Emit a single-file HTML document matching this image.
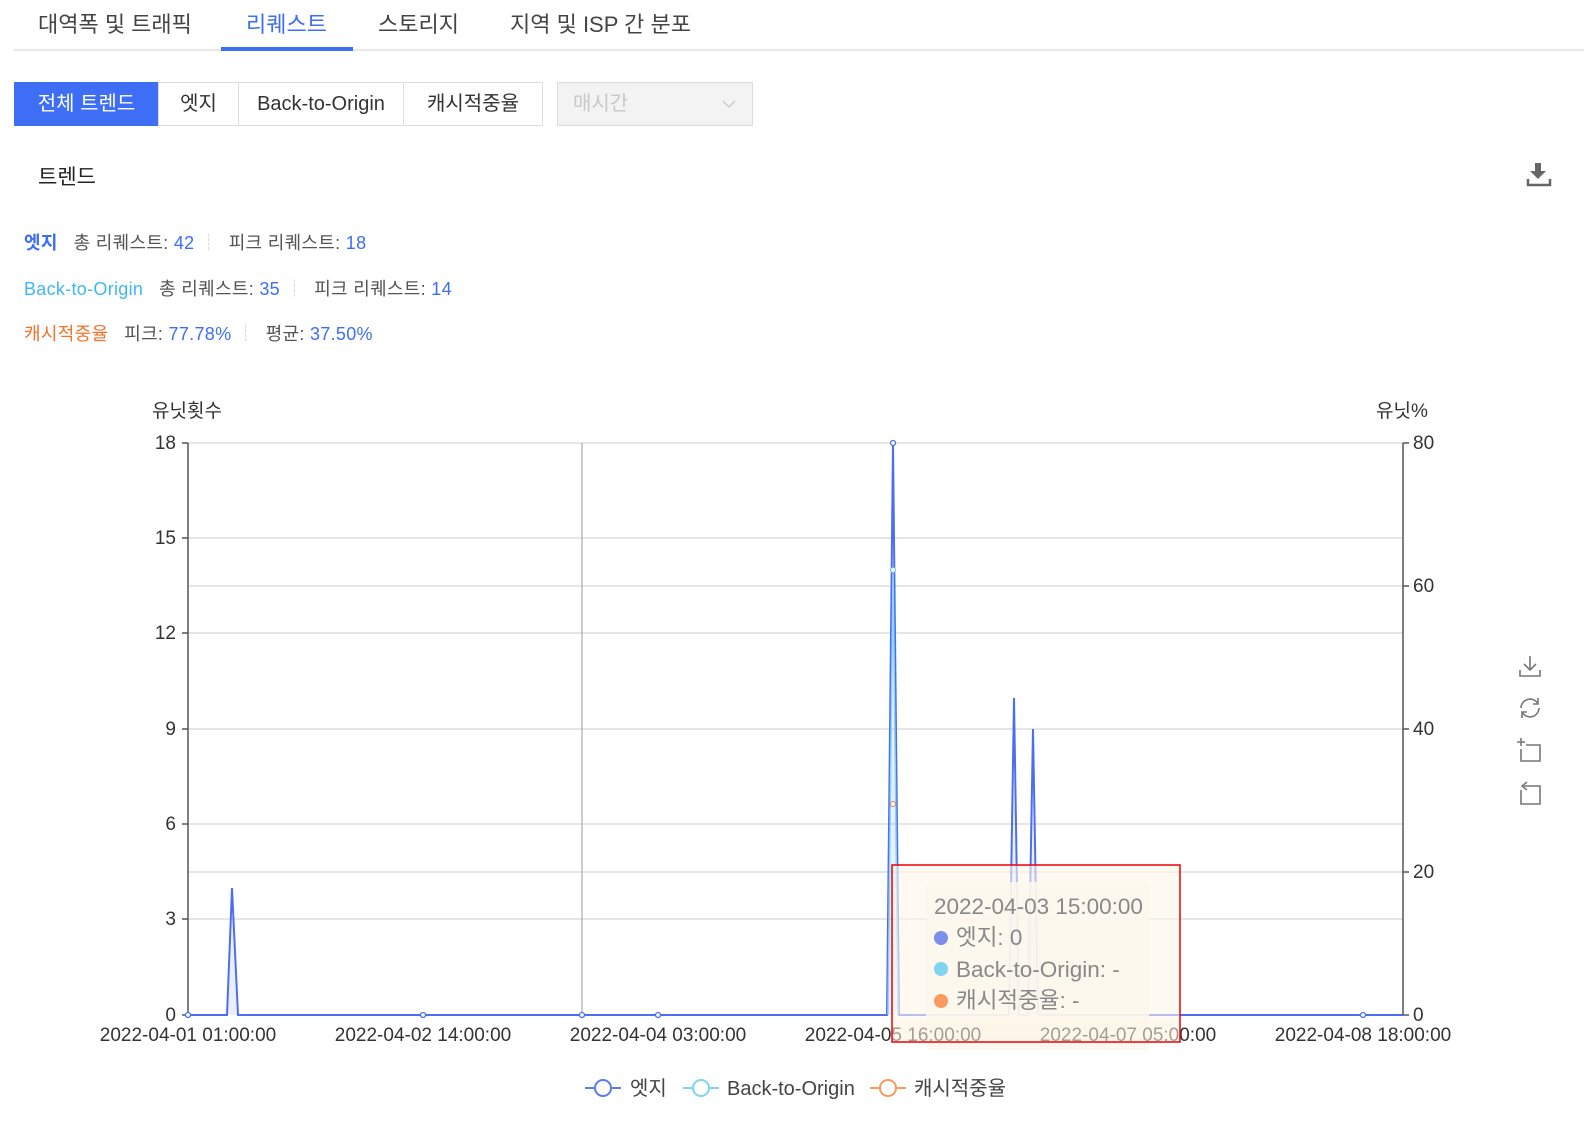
<!DOCTYPE html>
<html><head><meta charset="utf-8"><style>
*{margin:0;padding:0;box-sizing:border-box}
body{width:1584px;height:1125px;background:#fff;font-family:"Liberation Sans","Noto Sans CJK KR",sans-serif;color:#333;position:relative;overflow:hidden}
.abs{position:absolute;white-space:nowrap}
.tab{top:7px;font-size:22px;color:#444}
.btn{position:absolute;top:82px;height:44px;border:1px solid #ddd;font-size:20px;line-height:42px;text-align:center;color:#333;background:#fff}
.st{font-size:18px;color:#555;letter-spacing:0.3px}
.b{color:#3d6ef5}
</style></head><body>
<div class="abs tab" style="left:38px">대역폭 및 트래픽</div>
<div class="abs tab" style="left:246px;color:#3d6ef5">리퀘스트</div>
<div class="abs tab" style="left:378px">스토리지</div>
<div class="abs tab" style="left:510px">지역 및 ISP 간 분포</div>
<div class="abs" style="left:14px;top:49px;width:1570px;height:2px;background:#e8e8e8"></div>
<div class="abs" style="left:221px;top:47px;width:132px;height:4px;background:#3d6ef5"></div>

<div class="btn" style="left:14px;width:145px;background:#3d6ef5;border-color:#3d6ef5;color:#fff">전체 트렌드</div>
<div class="btn" style="left:158px;width:81px">엣지</div>
<div class="btn" style="left:238px;width:166px">Back-to-Origin</div>
<div class="btn" style="left:403px;width:140px">캐시적중율</div>
<div class="btn" style="left:557px;width:196px;background:#f3f3f3;color:#c8c8c8;text-align:left;padding-left:15px">매시간<svg style="position:absolute;right:16px;top:17px" width="14" height="9"><path d="M1 1l6 6 6-6" stroke="#ccc" stroke-width="1.5" fill="none"/></svg></div>

<div class="abs" style="left:38px;top:161px;font-size:21px;color:#222">트렌드</div>
<svg class="abs" style="left:1526px;top:162px" width="26" height="26" viewBox="0 0 26 26"><path d="M9 1h6v8h5l-8 8-8-8h5z" fill="#666"/><path d="M2 17v6h22v-6" stroke="#666" stroke-width="2.5" fill="none"/></svg>

<div class="abs st" style="left:24px;top:229px"><span style="color:#3d6ef5;font-weight:bold">엣지</span>&nbsp;&nbsp; 총 리퀘스트: <span class="b">42</span> <span style="color:#ccc">┊</span>&nbsp; 피크 리퀘스트: <span class="b">18</span></div>
<div class="abs st" style="left:24px;top:275px"><span style="color:#3db8f5">Back-to-Origin</span>&nbsp;&nbsp; 총 리퀘스트: <span class="b">35</span> <span style="color:#ccc">┊</span>&nbsp; 피크 리퀘스트: <span class="b">14</span></div>
<div class="abs st" style="left:24px;top:320px"><span style="color:#f5702a">캐시적중율</span>&nbsp;&nbsp; 피크: <span class="b">77.78%</span> <span style="color:#ccc">┊</span>&nbsp; 평균: <span class="b">37.50%</span></div>

<svg class="abs" style="left:0;top:0" width="1584" height="1125" font-family="Liberation Sans,Noto Sans CJK KR,sans-serif">
<g stroke="#ddd" stroke-width="1.5">
<line x1="188" x2="1403" y1="443" y2="443"/><line x1="188" x2="1403" y1="538" y2="538"/><line x1="188" x2="1403" y1="586" y2="586"/><line x1="188" x2="1403" y1="633" y2="633"/><line x1="188" x2="1403" y1="729" y2="729"/><line x1="188" x2="1403" y1="824" y2="824"/><line x1="188" x2="1403" y1="872" y2="872"/><line x1="188" x2="1403" y1="919" y2="919"/>
</g>
<line x1="582" x2="582" y1="443" y2="1015" stroke="#aaa" stroke-width="1.2"/>
<g stroke="#555" stroke-width="1.5">
<line x1="188" x2="188" y1="443" y2="1015"/><line x1="1403" x2="1403" y1="443" y2="1015"/>
<line x1="182" x2="188" y1="443" y2="443"/><line x1="182" x2="188" y1="538" y2="538"/><line x1="182" x2="188" y1="633" y2="633"/><line x1="182" x2="188" y1="729" y2="729"/><line x1="182" x2="188" y1="824" y2="824"/><line x1="182" x2="188" y1="919" y2="919"/><line x1="182" x2="188" y1="1015" y2="1015"/>
<line x1="1403" x2="1409" y1="443" y2="443"/><line x1="1403" x2="1409" y1="586" y2="586"/><line x1="1403" x2="1409" y1="729" y2="729"/><line x1="1403" x2="1409" y1="872" y2="872"/><line x1="1403" x2="1409" y1="1015" y2="1015"/>
</g>
<g font-size="19" fill="#333" text-anchor="end">
<text x="176" y="449">18</text><text x="176" y="544">15</text><text x="176" y="639">12</text><text x="176" y="735">9</text><text x="176" y="830">6</text><text x="176" y="925">3</text><text x="176" y="1021">0</text>
</g>
<g font-size="19" fill="#333">
<text x="1413" y="449">80</text><text x="1413" y="592">60</text><text x="1413" y="735">40</text><text x="1413" y="878">20</text><text x="1413" y="1021">0</text>
<text x="152" y="417">유닛횟수</text><text x="1376" y="417">유닛%</text>
</g>
<path d="M188 1015H227L232 888L238 1015H887L893 443L899 1015H1009L1014 698L1019 1015H1028L1033 729L1038 1015H1403" fill="rgba(90,120,240,0.12)" stroke="#4e6ef2" stroke-width="2"/>
<path d="M888 1015L893 570L898 1015" fill="none" stroke="#8ad4f5" stroke-width="1.5"/>
<g fill="#fff" stroke="#4e6ef2" stroke-width="1.3">
<circle cx="893" cy="443" r="2.5"/><circle cx="423" cy="1015" r="2.5"/><circle cx="582" cy="1015" r="2.5"/><circle cx="658" cy="1015" r="2.5"/><circle cx="1363" cy="1015" r="2.5"/><circle cx="188" cy="1015" r="2.5"/>
</g>
<circle cx="893" cy="570" r="2.5" fill="#fff" stroke="#5cc8f0"/>
<circle cx="893" cy="804" r="2.5" fill="#fff" stroke="#f57a3a"/>
<rect x="892" y="865" width="288" height="177" fill="rgba(253,246,232,0.6)"/>
<rect x="926" y="882" width="223" height="168" rx="5" fill="rgba(253,247,236,0.85)"/>
<g font-size="19" fill="#333" text-anchor="middle">
<text x="188" y="1041">2022-04-01 01:00:00</text><text x="423" y="1041">2022-04-02 14:00:00</text><text x="658" y="1041">2022-04-04 03:00:00</text><text x="893" y="1041">2022-04-05 16:00:00</text><text x="1128" y="1041">2022-04-07 05:00:00</text><text x="1363" y="1041">2022-04-08 18:00:00</text>
</g>
<rect x="892" y="1020" width="288" height="22" fill="rgba(253,246,232,0.55)"/>
<rect x="892" y="865" width="288" height="177" fill="none" stroke="#e8000b" stroke-width="1.5"/>
<g font-size="22.5" fill="#888">
<text x="934" y="914">2022-04-03 15:00:00</text>
<circle cx="941" cy="938" r="7" fill="#7b8ee8"/><text x="956" y="945">엣지: 0</text>
<circle cx="941" cy="969" r="7" fill="#80d4ee"/><text x="956" y="977">Back-to-Origin: -</text>
<circle cx="941" cy="1001" r="7" fill="#fa9a5f"/><text x="956" y="1008">캐시적중율: -</text>
</g>
<g fill="none" stroke-width="2">
<line x1="585" x2="621" y1="1088" y2="1088" stroke="#5b7cf0"/><circle cx="603" cy="1088" r="8" fill="#fff" stroke="#5b7cf0"/>
<line x1="683" x2="719" y1="1088" y2="1088" stroke="#7fd3f3"/><circle cx="701" cy="1088" r="8" fill="#fff" stroke="#7fd3f3"/>
<line x1="870" x2="906" y1="1088" y2="1088" stroke="#fa9a5f"/><circle cx="888" cy="1088" r="8" fill="#fff" stroke="#fa9a5f"/>
</g>
<g font-size="20" fill="#444"><text x="630" y="1095">엣지</text><text x="727" y="1095">Back-to-Origin</text><text x="914" y="1095">캐시적중율</text></g>
<g fill="none" stroke="#777" stroke-width="1.6">
<path d="M1530 656v14M1524 664l6 6 6-6M1520 670v6h20v-6"/>
<path d="M1521 708a9 9 0 0 1 17-4M1539 708a9 9 0 0 1-17 4M1538 698v6h-5M1522 718v-6h5"/>
<path d="M1526 745h14v16h-19v-12M1521 738v8M1517 742h8"/>
<path d="M1524 786h16v18h-19v-14M1527 782l-5 4 5 4"/>
</g>
</svg>
</body></html>
